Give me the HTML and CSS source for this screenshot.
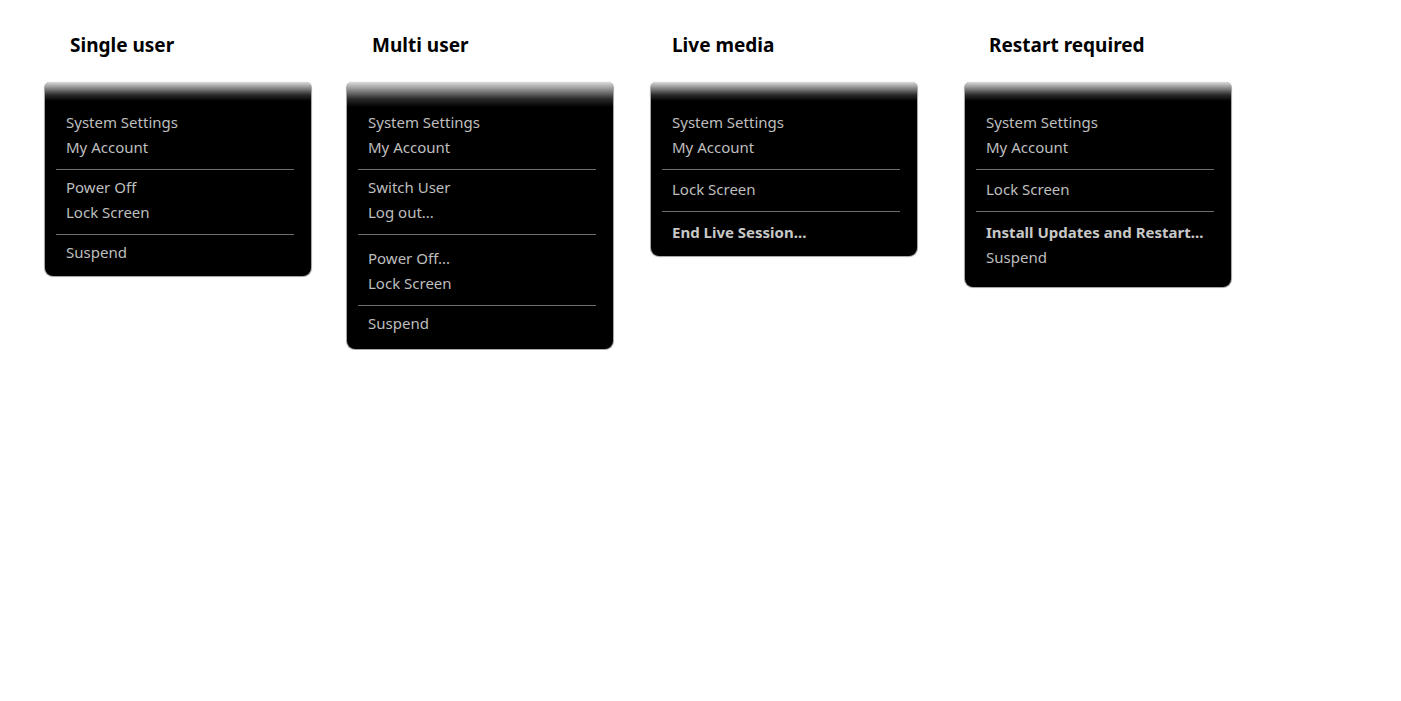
FILE: index.html
```html
<!DOCTYPE html>
<html>
<head>
<meta charset="utf-8">
<link rel="stylesheet" href="styles.css">
</head>
<body>
<div class="board">
  <section class="col">
    <h2 class="title">Single user</h2>
    <div class="menu">
      <div class="item">System Settings</div>
      <div class="item">My Account</div>
      <div class="sep"></div>
      <div class="item">Power Off</div>
      <div class="item">Lock Screen</div>
      <div class="sep"></div>
      <div class="item">Suspend</div>
    </div>
  </section>
  <section class="col">
    <h2 class="title">Multi user</h2>
    <div class="menu menu-tall">
      <div class="item">System Settings</div>
      <div class="item">My Account</div>
      <div class="sep"></div>
      <div class="item">Switch User</div>
      <div class="item">Log out...</div>
      <div class="sep sep-wide"></div>
      <div class="item">Power Off...</div>
      <div class="item">Lock Screen</div>
      <div class="sep"></div>
      <div class="item">Suspend</div>
    </div>
  </section>
  <section class="col col-live">
    <h2 class="title">Live media</h2>
    <div class="menu menu-live">
      <div class="item">System Settings</div>
      <div class="item">My Account</div>
      <div class="sep"></div>
      <div class="item">Lock Screen</div>
      <div class="sep"></div>
      <div class="item bold">End Live Session...</div>
    </div>
  </section>
  <section class="col col-restart">
    <h2 class="title">Restart required</h2>
    <div class="menu menu-restart">
      <div class="item">System Settings</div>
      <div class="item">My Account</div>
      <div class="sep"></div>
      <div class="item">Lock Screen</div>
      <div class="sep"></div>
      <div class="item bold">Install Updates and Restart...</div>
      <div class="item">Suspend</div>
    </div>
  </section>
</div>
</body>
</html>
```

FILE: styles.css
```css
html, body {
  margin: 0;
  padding: 0;
  background: #ffffff;
}

body {
  font-family: "Noto Sans", "Open Sans", sans-serif;
}

.board {
  display: grid;
  grid-template-columns: 302px 304px 314px 268px;
  align-items: start;
  padding: 32px 0 0 44px;
}

.col {
  display: flex;
  flex-direction: column;
  width: 268px;
}

.title {
  margin: 0 0 23px 0;
  padding-left: 26px;
  font-size: 19px;
  line-height: 27px;
  font-weight: 700;
  color: #000000;
}

.col-live .title {
  padding-left: 22px;
}

.col-restart .title {
  padding-left: 25px;
}

.menu {
  box-sizing: border-box;
  width: 268px;
  padding: 28px 17px 11px 11px;
  background: linear-gradient(to bottom, #dcdcdc 0px, #8a8a8a 6px, #2a2a2a 13px, #000000 19px);
  border: 1px solid #a8a8a8;
  border-top: none;
  border-radius: 6px 6px 9px 9px;
  box-shadow: 0 0 1px rgba(0, 0, 0, 0.25);
}

.menu-tall {
  padding-bottom: 13px;
  background: linear-gradient(to bottom, #dcdcdc 0px, #8a8a8a 8px, #2a2a2a 17px, #000000 25px);
}

.menu-live {
  padding-bottom: 11px;
}

.menu-restart {
  padding-bottom: 17px;
}

.menu-live .sep,
.menu-restart .sep {
  margin-bottom: 7px;
}

.item {
  height: 25px;
  line-height: 25px;
  padding-left: 10px;
  font-size: 15px;
  color: #bebebe;
  white-space: nowrap;
}

.item.bold {
  height: 26px;
  line-height: 26px;
  font-weight: 700;
  color: #c8c8c8;
}

.sep {
  height: 1px;
  margin: 9px 0 5px 0;
  background: #6e6e6e;
}

.sep.sep-wide {
  margin-bottom: 11px;
}
```
